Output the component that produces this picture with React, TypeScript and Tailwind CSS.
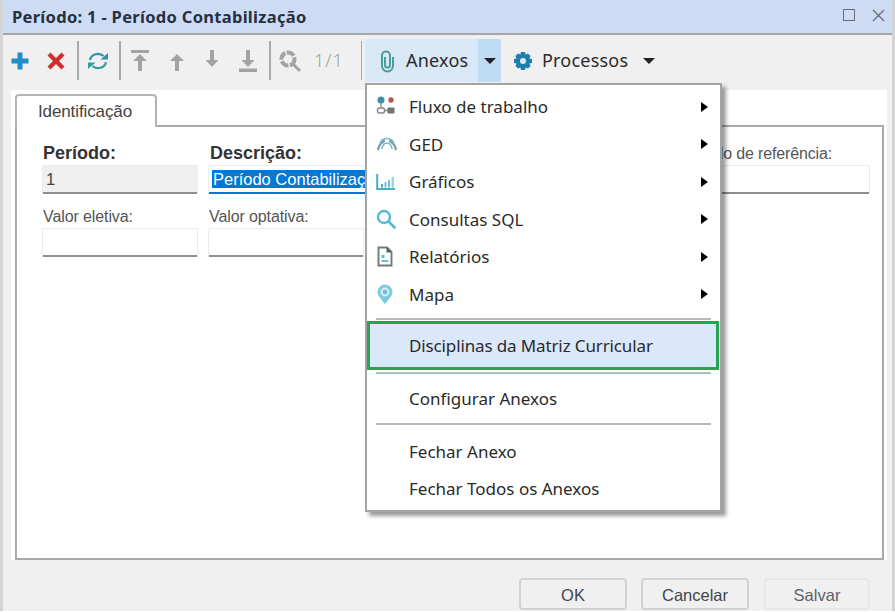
import { ReactNode } from "react";

const uiFont = "font-['Noto_Sans','Open_Sans',sans-serif]";

function Sep({ className }: { className?: string }) {
  return <div className={`h-[39px] w-[2px] shrink-0 bg-[#a9a9a9] ${className ?? ""}`} />;
}

function ToolIcon({ children, w = 36 }: { children: ReactNode; w?: number }) {
  return (
    <div className="flex h-[39px] shrink-0 items-center justify-center" style={{ width: w }}>
      {children}
    </div>
  );
}

const grayFill = "#a3a3a3";

function Arrow({ dir, bar }: { dir: "up" | "down"; bar?: boolean }) {
  const up = dir === "up";
  return (
    <svg width="20" height="24" viewBox="0 0 20 24">
      {up ? (
        <>
          {bar ? <rect x="1" y="1" width="18" height="3" fill={grayFill} /> : null}
          <path d="M10 5 L17 12 H12 V22 H8 V12 H3 Z" fill={grayFill} />
        </>
      ) : (
        <>
          <path d="M8 1 H12 V11 H16.5 L10 18 L3.5 11 H8 Z" fill={grayFill} />
          {bar ? <rect x="1" y="19.5" width="18" height="3.5" fill={grayFill} /> : null}
        </>
      )}
    </svg>
  );
}

function Field({ className, children }: { className?: string; children?: ReactNode }) {
  return (
    <div
      className={`h-[29px] overflow-hidden rounded-[2px] border border-[#ececec] border-b-2 border-b-[#8e8e8e] ${className ?? ""}`}
    >
      {children}
    </div>
  );
}

function ItemIcon({ name }: { name: string }) {
  if (name === "flow")
    return (
      <svg width="20" height="20" viewBox="0 0 20 20" className="-mt-[3px]">
        <path d="M5 6 V14 M8 15.5 H12" stroke="#7f8c8f" strokeWidth="1.3" />
        <circle cx="5" cy="5" r="3.5" fill="#3f8ea3" />
        <circle cx="15" cy="5" r="2.7" fill="#b9534f" />
        <rect x="1.5" y="13" width="7" height="5" rx="2" fill="#fff" stroke="#7f8c8f" strokeWidth="1.5" />
        <rect x="11.5" y="12.5" width="7" height="6" rx="1" fill="#6d7476" />
      </svg>
    );
  if (name === "ged")
    return (
      <svg width="22" height="16" viewBox="0 0 22 16" className="-mt-[1px]">
        <path d="M2 14 C3 9 5 7 7 6 M20 14 C19 9 17 7 15 6" fill="none" stroke="#8d9aa0" strokeWidth="2.4" />
        <circle cx="7" cy="5" r="2" fill="#8d9aa0" />
        <circle cx="15" cy="5" r="2" fill="#8d9aa0" />
        <path d="M6 13 C7 5 15 5 16 13" fill="none" stroke="#6cc0d8" strokeWidth="1.6" />
        <path d="M4 7 C7 1 15 1 18 7" fill="none" stroke="#6cc0d8" strokeWidth="1.6" />
      </svg>
    );
  if (name === "chart")
    return (
      <svg width="20" height="18" viewBox="0 0 20 18">
        <path d="M1.2 1 V16 H19" fill="none" stroke="#45b0cd" strokeWidth="2" />
        <rect x="5" y="11" width="2" height="3.5" fill="#45b0cd" />
        <rect x="8.5" y="9" width="2" height="5.5" fill="#6cc0d8" />
        <rect x="12" y="7" width="2" height="7.5" fill="#6cc0d8" />
        <rect x="15.5" y="4" width="2.4" height="10.5" fill="#93d2e3" />
      </svg>
    );
  if (name === "search")
    return (
      <svg width="20" height="20" viewBox="0 0 20 20">
        <circle cx="8" cy="8" r="6" fill="none" stroke="#55b8d2" strokeWidth="2.4" />
        <path d="M12.5 12.5 L18.5 18.5" stroke="#55b8d2" strokeWidth="2.6" strokeLinecap="round" />
      </svg>
    );
  if (name === "report")
    return (
      <svg width="18" height="21" viewBox="0 0 18 21">
        <path d="M2.5 1.5 H11 L15.5 6 V19.5 H2.5 Z" fill="#fff" stroke="#6f7a7d" strokeWidth="1.9" />
        <path d="M10.5 1 V6.5 H16 Z" fill="#555e60" />
        <rect x="5.5" y="9" width="3" height="3" fill="#68b5c9" />
        <path d="M5.5 15 H12.5" stroke="#68b5c9" strokeWidth="1.8" />
      </svg>
    );
  return (
    <svg width="18" height="21" viewBox="0 0 18 21">
      <path d="M9 20 C4 14 1.5 11 1.5 8 A7.5 7.5 0 0 1 16.5 8 C16.5 11 14 14 9 20 Z" fill="#7ccbdf" />
      <circle cx="9" cy="8" r="4.4" fill="#d8f0f6" />
      <circle cx="9" cy="8" r="2.4" fill="#6cc0d8" />
    </svg>
  );
}

function MenuItem({ label, icon, sub }: { label: string; icon?: string; sub?: boolean }) {
  return (
    <div className="flex h-[37.5px] items-center pl-[9px] pr-[12px]">
      <div className="flex w-[33px] shrink-0 items-center justify-start">{icon ? <ItemIcon name={icon} /> : null}</div>
      <span className="flex-1 text-[17px] leading-none text-[#2a2a2a]">{label}</span>
      {sub ? <div className="h-0 w-0 border-y-[5.5px] border-l-[7px] border-y-transparent border-l-black" /> : null}
    </div>
  );
}

function MenuSep() {
  return <div className="mx-[9px] h-[2px] bg-[#b9b9b9]" />;
}

export default function App() {
  return (
    <div className={`relative h-[613px] w-[895px] overflow-hidden bg-white ${uiFont}`}>
      <div className="flex h-[611px] flex-col border-x-[3px] border-[#d4d4d4] bg-[#f0f0f0]">
        {/* titulo */}
        <div className="flex h-[35px] shrink-0 items-center justify-between border-b-2 border-[#a8a8a8] bg-[#cddcf4] pl-[9px] pr-[7px]">
          <span className="pt-[1px] text-[16.5px] font-bold tracking-[0.3px] text-[#26303f]">
            Período: 1 - Período Contabilização
          </span>
          <div className="flex items-center gap-[17px] pb-[3px]">
            <div className="h-[12px] w-[12px] border-[1.5px] border-[#6a6f76]" />
            <svg width="13" height="13" viewBox="0 0 13 13">
              <path d="M1 1 L12 12 M12 1 L1 12" stroke="#6a6f76" strokeWidth="1.4" />
            </svg>
          </div>
        </div>

        {/* toolbar */}
        <div className="flex h-[55px] shrink-0 items-center pb-[4px]">
          <ToolIcon w={34}>
            <svg width="20" height="20" viewBox="0 0 20 20">
              <path d="M7.5 1.5 H12.5 V7.5 H18.5 V12.5 H12.5 V18.5 H7.5 V12.5 H1.5 V7.5 H7.5 Z" fill="#1f8fc9" />
            </svg>
          </ToolIcon>
          <ToolIcon w={38}>
            <svg width="20" height="20" viewBox="0 0 20 20">
              <path d="M4.5 1.5 L10 7 L15.5 1.5 L18.5 4.5 L13 10 L18.5 15.5 L15.5 18.5 L10 13 L4.5 18.5 L1.5 15.5 L7 10 L1.5 4.5 Z" fill="#cf2f2f" />
            </svg>
          </ToolIcon>
          <Sep className="ml-[2px]" />
          <ToolIcon w={38}>
            <svg width="22" height="20" viewBox="0 0 22 20" fill="none">
              <path d="M3 9 A8 7.5 0 0 1 16.5 5" stroke="#2f8fb0" strokeWidth="2.2" />
              <path d="M19 11 A8 7.5 0 0 1 5.5 15" stroke="#2f9f9f" strokeWidth="2.2" />
              <path d="M13.5 8.5 H21 V2 Z" fill="#2f8fb0" />
              <path d="M8.5 11.5 H1 V18 Z" fill="#2f9f9f" />
            </svg>
          </ToolIcon>
          <Sep className="ml-[2px]" />
          <ToolIcon w={38}>
            <Arrow dir="up" bar />
          </ToolIcon>
          <ToolIcon w={35}>
            <Arrow dir="up" />
          </ToolIcon>
          <ToolIcon>
            <Arrow dir="down" />
          </ToolIcon>
          <ToolIcon>
            <Arrow dir="down" bar />
          </ToolIcon>
          <Sep className="ml-[3px]" />
          <ToolIcon w={38}>
            <svg width="24" height="24" viewBox="0 0 24 24" fill="none">
              <circle cx="10" cy="10" r="6.5" stroke={grayFill} strokeWidth="4" strokeDasharray="8 1.5" />
              <path d="M15 15 L22 22" stroke={grayFill} strokeWidth="3" />
            </svg>
          </ToolIcon>
          <span className="w-[52px] pl-[5px] text-[18px] font-light tracking-[1px] text-[#a0a0a0]">1/1</span>
          <div className="h-[39px] w-[1px] shrink-0 bg-[#a9a9a9]" />

          <div className="ml-[3px] flex h-[43px] w-[136px] shrink-0 overflow-hidden rounded-[2px] bg-[#d8e8f6]">
            <div className="flex flex-1 items-center pl-[15px]">
              <svg width="15" height="24" viewBox="0 0 15 24" fill="none">
                <path
                  d="M13 8 V17 A5.5 5.5 0 0 1 2 17 V6.5 A4 4 0 0 1 10 6.5 V16 A2.5 2.5 0 0 1 5 16 V8"
                  stroke="#4a9e9a"
                  strokeWidth="2"
                />
              </svg>
              <span className="ml-[11px] text-[18px] tracking-[0.2px] text-[#2a2a2a]">Anexos</span>
            </div>
            <div className="flex w-[23px] items-center justify-center bg-[#bfdcf4]">
              <div className="h-0 w-0 border-x-[6px] border-t-[6px] border-x-transparent border-t-[#222]" />
            </div>
          </div>

          <div className="ml-[12px] flex items-center">
            <svg width="20" height="20" viewBox="0 0 20 20">
              <path
                d="M8 1 H12 L12.6 3.6 L15 2.4 L17.6 5 L16.4 7.4 L19 8 V12 L16.4 12.6 L17.6 15 L15 17.6 L12.6 16.4 L12 19 H8 L7.4 16.4 L5 17.6 L2.4 15 L3.6 12.6 L1 12 V8 L3.6 7.4 L2.4 5 L5 2.4 L7.4 3.6 Z"
                fill="#1d7fb0"
              />
              <circle cx="10" cy="10" r="3" fill="#dcebf3" />
            </svg>
            <span className="ml-[9px] text-[18px] tracking-[0.2px] text-[#2a2a2a]">Processos</span>
            <div className="ml-[15px] h-0 w-0 border-x-[6px] border-t-[6px] border-x-transparent border-t-[#222]" />
          </div>
        </div>

        {/* corpo */}
        <div className="ml-[8px] mr-[5px] flex h-[470px] shrink-0 flex-col bg-white pl-[4px] pr-[3px] pt-[3px]">
          <div className="flex h-[32px] shrink-0 items-end">
            <div className="relative z-10 -mb-[2px] flex h-[33px] w-[142px] items-center justify-center rounded-t-[4px] border-2 border-b-0 border-[#b4b4b4] bg-white pr-[2px] font-['Liberation_Sans',sans-serif] text-[17px] tracking-[-0.1px] text-[#444]">
              Identificação
            </div>
          </div>
          <div className="h-[435px] border-2 border-[#a9a9a9] bg-white pl-[25px] pr-[12px] pt-[16px] font-['Liberation_Sans',sans-serif]">
            <div className="grid grid-cols-[156px_459px_1fr] gap-x-[10px]">
              <div className="pl-[1px] text-[18px] leading-[21px] font-bold text-[#333]">Período:</div>
              <div className="pl-[2px] text-[18px] leading-[21px] font-bold text-[#333]">Descrição:</div>
              <div className="flex h-[21px] items-center text-[16px] tracking-[-0.15px] text-[#555]">Período de referência:</div>
              <Field className="mt-[1px] flex items-center bg-[#f0f0f0] pl-[3px] text-[16.5px] text-[#444]">1</Field>
              <Field className="mt-[1px] flex items-center !border-b-[#0078d7] pl-[3px]">
                <span className="bg-[#0078d7] px-[1px] text-[16.5px] leading-[18px] whitespace-nowrap text-white">
                  Período Contabilização
                </span>
              </Field>
              <Field className="mt-[1px]" />
            </div>
            <div className="mt-[13px] grid grid-cols-[156px_156px] gap-x-[10px]">
              <div className="h-[21px] pl-[1px] text-[16px] leading-[20px] tracking-[-0.1px] text-[#555]">Valor eletiva:</div>
              <div className="h-[21px] pl-[1px] text-[16px] leading-[20px] tracking-[-0.1px] text-[#555]">Valor optativa:</div>
              <Field />
              <Field />
            </div>
          </div>
        </div>

        {/* botoes */}
        <div className="flex flex-1 items-start justify-end pr-[22px] pt-[18px] font-['Liberation_Sans',sans-serif] text-[16.5px]">
          <div className="flex h-[32px] w-[108px] items-center justify-center rounded-[4px] border-2 border-[#d2d2d2] pt-[2px] text-[#3f4650]">OK</div>
          <div className="ml-[14px] flex h-[32px] w-[108px] items-center justify-center rounded-[4px] border-2 border-[#d2d2d2] pt-[2px] text-[#3f4650]">Cancelar</div>
          <div className="ml-[15px] flex h-[32px] w-[106px] items-center justify-center rounded-[4px] border-2 border-[#e8e8e8] pt-[2px] text-[#5c6269]">Salvar</div>
        </div>
      </div>

      {/* menu anexos */}
      <div className="absolute left-[365px] top-[83px] h-[429px] w-[357px] border-2 border-[#a3a3a3] bg-white pt-[3px] shadow-[4px_4px_4px_rgba(0,0,0,0.4)]">
        <MenuItem label="Fluxo de trabalho" icon="flow" sub />
        <MenuItem label="GED" icon="ged" sub />
        <MenuItem label="Gráficos" icon="chart" sub />
        <MenuItem label="Consultas SQL" icon="search" sub />
        <MenuItem label="Relatórios" icon="report" sub />
        <MenuItem label="Mapa" icon="map" sub />
        <div className="mt-[5px]">
          <MenuSep />
        </div>
        <div className="mt-[1px] flex h-[49px] w-[352px] items-center border-[3px] border-[#22a650] bg-[#dbe8fa] pl-[39px] text-[17px] tracking-[-0.13px] text-[#2a2a2a]">
          Disciplinas da Matriz Curricular
        </div>
        <div className="mt-[2px]">
          <MenuSep />
        </div>
        <div className="mt-[6px]">
          <MenuItem label="Configurar Anexos" />
        </div>
        <div className="mt-[5px]">
          <MenuSep />
        </div>
        <div className="mt-[8px]">
          <MenuItem label="Fechar Anexo" />
          <MenuItem label="Fechar Todos os Anexos" />
        </div>
      </div>
    </div>
  );
}
